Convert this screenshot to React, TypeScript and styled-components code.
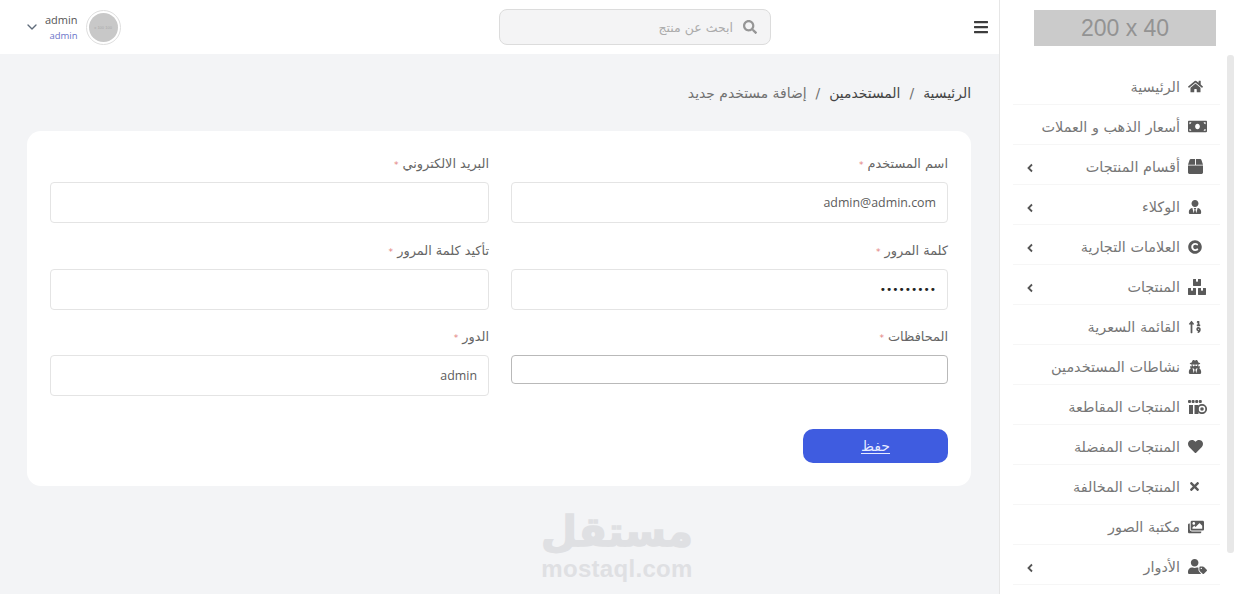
import React from "react";
import styled, { createGlobalStyle } from "styled-components";
import { ChevronDown } from "lucide-react";
import {
  FaBars,
  FaBox,
  FaBoxes,
  FaCopyright,
  FaHeart,
  FaHome,
  FaImages,
  FaMoneyBill,
  FaSearch,
  FaSortNumericUp,
  FaTimes,
  FaUserSecret,
  FaUserTag,
  FaUserTie,
} from "react-icons/fa";

const ARABIC = `"DejaVu Sans", "Noto Sans", sans-serif`;
const LATIN = `"Open Sans", "Noto Sans", sans-serif`;

const GlobalStyle = createGlobalStyle`
  html, body {
    margin: 0;
    height: 100%;
    overflow: hidden;
    background: #fff;
  }
  * {
    box-sizing: border-box;
  }
`;

const Page = styled.div`
  direction: rtl;
  display: flex;
  width: 1234px;
  height: 594px;
  overflow: hidden;
  font-family: ${ARABIC};
  position: relative;
`;

const Sidebar = styled.aside`
  width: 235px;
  flex-shrink: 0;
  background: #fff;
  border-left: 1px solid #e6e6e6;
  padding: 10px 14px 0 13px;
  position: relative;
`;

const LogoBox = styled.div`
  width: 182px;
  height: 36px;
  margin: 0 4px 19px 0;
  background: #cbcbcb;
  color: #939393;
  font: 23px "Liberation Sans", sans-serif;
  display: flex;
  align-items: center;
  justify-content: center;
  direction: ltr;
`;

const ScrollThumb = styled.div`
  position: absolute;
  top: 55px;
  right: 0;
  width: 7px;
  height: 498px;
  background: #e8e8e8;
  border-radius: 3px;
`;

const MenuList = styled.nav`
  display: flex;
  flex-direction: column;
`;

const MenuItem = styled.a`
  height: 40px;
  padding: 4px 13px 0 13px;
  display: flex;
  align-items: center;
  border-bottom: 1px solid #f6f6f6;
  color: #777;
  font-size: 14.4px;
`;

const MenuIcon = styled.span`
  width: 19px;
  margin-left: 8px;
  display: flex;
  justify-content: flex-end;
  color: #5a5a5a;
  flex-shrink: 0;
`;

const MenuArrow = styled.svg`
  margin-right: auto;
  margin-top: 3px;
  display: block;
  color: #555;
`;

const Main = styled.main`
  flex: 1;
  min-width: 0;
  background: #f3f4f6;
`;

const Topbar = styled.header`
  height: 54px;
  background: #fff;
  display: flex;
  align-items: center;
  padding: 0 10px 0 24px;
`;

const MenuButton = styled.span`
  display: flex;
  color: #3d3d3d;
  font-size: 16px;
  margin-left: 202px;
`;

const SearchBox = styled.div`
  width: 272px;
  height: 36px;
  background: #f4f4f5;
  border: 1px solid #dcdcdc;
  border-radius: 8px;
  display: flex;
  align-items: center;
  gap: 10px;
  padding: 0 13px;
  color: #ababab;
  font-size: 12.5px;
`;

const SearchIcon = styled.span`
  display: flex;
  color: #969696;
  font-size: 14px;
`;

const UserArea = styled.div`
  margin-right: auto;
  display: flex;
  align-items: center;
  gap: 5px;
`;

const Avatar = styled.div`
  width: 35px;
  height: 35px;
  border-radius: 50%;
  border: 1px solid #dedede;
  padding: 2px;
  background: #fff;
  margin-left: 3px;
`;

const AvatarFill = styled.div`
  width: 100%;
  height: 100%;
  border-radius: 50%;
  background: #c8c8c8;
  color: #aaa;
  font: 4px "Liberation Sans", sans-serif;
  display: flex;
  align-items: center;
  justify-content: center;
`;

const UserText = styled.div`
  display: flex;
  flex-direction: column;
  align-items: flex-start;
  font-family: ${LATIN};
`;

const UserName = styled.span`
  font-size: 11px;
  line-height: 17px;
  color: #555;
`;

const UserRole = styled.span`
  font-size: 9.5px;
  line-height: 16px;
  color: #6a74c9;
`;

const UserChevron = styled.span`
  display: flex;
  color: #5f6b7a;
`;

const Content = styled.div`
  padding: 28px 28px 0 27px;
`;

const Breadcrumb = styled.div`
  height: 22px;
  display: flex;
  align-items: center;
  gap: 9px;
  font-size: 13.9px;
  margin-bottom: 27px;
`;

const Crumb = styled.span<{ $muted?: boolean }>`
  color: ${(p) => (p.$muted ? "#707070" : "#444")};
`;

const Card = styled.section`
  background: #fff;
  border-radius: 14px;
  padding: 23px;
`;

const FormGrid = styled.div`
  display: grid;
  grid-template-columns: 437px 439px;
  column-gap: 22px;
  row-gap: 17.5px;
`;

const Field = styled.label`
  display: flex;
  flex-direction: column;
`;

const FieldLabel = styled.span`
  height: 20px;
  line-height: 20px;
  margin-bottom: 8px;
  font-size: 12.9px;
  color: #666;
`;

const Star = styled.span`
  color: #e3837f;
  font-size: 9px;
`;

const TextInput = styled.input`
  width: 100%;
  height: 41px;
  padding: 0 11px;
  background: #fff;
  border: 1px solid #e4e4e4;
  border-radius: 4px;
  direction: rtl;
  text-align: right;
  font-family: ${LATIN};
  font-size: 12.4px;
  color: #5c5c5c;
  outline: none;

  &[type="password"] {
    font-family: "DejaVu Sans", sans-serif;
    font-size: 10.6px;
    color: #222;
  }
`;

const SelectInput = styled.select`
  width: 100%;
  height: 29px;
  background: #fff;
  border: 1px solid #b9b9b9;
  border-radius: 4px;
  appearance: none;
  outline: none;
`;

const SaveButton = styled.button`
  display: block;
  width: 145px;
  height: 34px;
  margin-top: 33px;
  background: #3f5ce0;
  border: none;
  border-radius: 10px;
  color: #e6ebff;
  font-family: ${ARABIC};
  font-size: 14px;
  text-decoration: underline;
  text-underline-offset: 2px;
`;

const Watermark = styled.div`
  position: absolute;
  left: 542px;
  top: 506px;
  width: 150px;
  display: flex;
  flex-direction: column;
  align-items: center;
  color: #dfe0e3;
  font-weight: 700;
`;

const WatermarkArabic = styled.span`
  font-size: 41.5px;
  line-height: 52px;
  -webkit-text-stroke: 1.5px #dfe0e3;
`;

const WatermarkLatin = styled.span`
  font-family: "Liberation Sans", sans-serif;
  font-size: 24px;
  line-height: 22px;
  letter-spacing: 0.3px;
`;

const Awning = styled.svg`
  display: block;
`;

// no matching icon for this one in the packages
function StoreBadgeIcon() {
  return (
    <Awning width="19" height="14" viewBox="0 0 19 14" fill="currentColor">
      <rect x="0" y="0" width="3" height="3" rx="1" />
      <rect x="3.6" y="0" width="3" height="3" rx="1" />
      <rect x="7.2" y="0" width="3" height="3" rx="1" />
      <rect x="10.8" y="0" width="3" height="3" rx="1" />
      <rect x="1" y="5" width="4" height="9" />
      <rect x="6.5" y="5" width="4" height="9" />
      <circle cx="14" cy="9" r="4.2" fill="none" stroke="currentColor" strokeWidth="1.8" />
      <circle cx="14" cy="9" r="1.8" />
    </Awning>
  );
}

function ArrowIcon() {
  return (
    <MenuArrow width="8" height="10" viewBox="0 0 8 10" fill="none">
      <polyline
        points="6,1.5 2.5,5 6,8.5"
        stroke="currentColor"
        strokeWidth="1.8"
      />
    </MenuArrow>
  );
}

const menu = [
  { label: "الرئيسية", icon: <FaHome size={15} /> },
  { label: "أسعار الذهب و العملات", icon: <FaMoneyBill size={19} /> },
  { label: "أقسام المنتجات", icon: <FaBox size={15} />, arrow: true },
  { label: "الوكلاء", icon: <FaUserTie size={14} />, arrow: true },
  { label: "العلامات التجارية", icon: <FaCopyright size={14} />, arrow: true },
  { label: "المنتجات", icon: <FaBoxes size={18} />, arrow: true },
  { label: "القائمة السعرية", icon: <FaSortNumericUp size={14} /> },
  { label: "نشاطات المستخدمين", icon: <FaUserSecret size={14} /> },
  { label: "المنتجات المقاطعة", icon: <StoreBadgeIcon /> },
  { label: "المنتجات المفضلة", icon: <FaHeart size={15} /> },
  { label: "المنتجات المخالفة", icon: <FaTimes size={13} /> },
  { label: "مكتبة الصور", icon: <FaImages size={16} /> },
  { label: "الأدوار", icon: <FaUserTag size={19} />, arrow: true },
];

function App() {
  return (
    <Page>
      <GlobalStyle />
      <Sidebar>
        <LogoBox>200 x 40</LogoBox>
        <MenuList>
          {menu.map((item) => (
            <MenuItem key={item.label}>
              <MenuIcon>{item.icon}</MenuIcon>
              {item.label}
              {item.arrow && <ArrowIcon />}
            </MenuItem>
          ))}
        </MenuList>
        <ScrollThumb />
      </Sidebar>
      <Main>
        <Topbar>
          <MenuButton>
            <FaBars />
          </MenuButton>
          <SearchBox>
            <SearchIcon>
              <FaSearch />
            </SearchIcon>
            ابحث عن منتج
          </SearchBox>
          <UserArea>
            <Avatar>
              <AvatarFill>100 x 100</AvatarFill>
            </Avatar>
            <UserText>
              <UserName>admin</UserName>
              <UserRole>admin</UserRole>
            </UserText>
            <UserChevron>
              <ChevronDown size={16} />
            </UserChevron>
          </UserArea>
        </Topbar>
        <Content>
          <Breadcrumb>
            <Crumb>الرئيسية</Crumb>
            <Crumb $muted>/</Crumb>
            <Crumb>المستخدمين</Crumb>
            <Crumb $muted>/</Crumb>
            <Crumb $muted>إضافة مستخدم جديد</Crumb>
          </Breadcrumb>
          <Card>
            <FormGrid>
              <Field>
                <FieldLabel>
                  اسم المستخدم <Star>*</Star>
                </FieldLabel>
                <TextInput readOnly value="admin@admin.com" />
              </Field>
              <Field>
                <FieldLabel>
                  البريد الالكتروني <Star>*</Star>
                </FieldLabel>
                <TextInput readOnly />
              </Field>
              <Field>
                <FieldLabel>
                  كلمة المرور <Star>*</Star>
                </FieldLabel>
                <TextInput readOnly type="password" value="123456789" />
              </Field>
              <Field>
                <FieldLabel>
                  تأكيد كلمة المرور <Star>*</Star>
                </FieldLabel>
                <TextInput readOnly />
              </Field>
              <Field>
                <FieldLabel>
                  المحافظات <Star>*</Star>
                </FieldLabel>
                <SelectInput />
              </Field>
              <Field>
                <FieldLabel>
                  الدور <Star>*</Star>
                </FieldLabel>
                <TextInput readOnly value="admin" />
              </Field>
            </FormGrid>
            <SaveButton>حفظ</SaveButton>
          </Card>
        </Content>
      </Main>
      <Watermark>
        <WatermarkArabic>مستقل</WatermarkArabic>
        <WatermarkLatin>mostaql.com</WatermarkLatin>
      </Watermark>
    </Page>
  );
}

export default App;
